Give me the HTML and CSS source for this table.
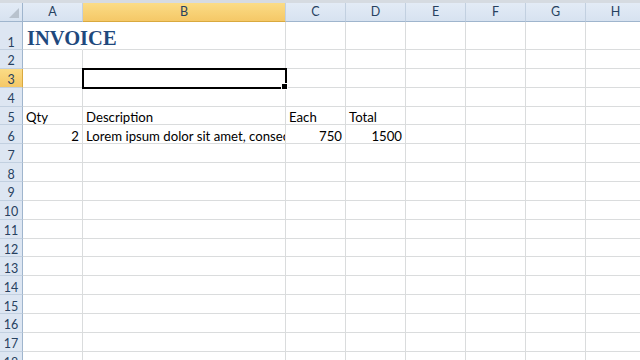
FILE: index.html
```html
<!DOCTYPE html>
<html>
<head>
<meta charset="utf-8">
<link rel="stylesheet" href="styles.css">
</head>
<body>
<div class="sheet">
  <div class="strip"></div>
  <div class="row head">
    <div class="corner"><span class="tri"></span></div>
    <div class="ch">A</div>
    <div class="ch sel">B</div>
    <div class="ch">C</div>
    <div class="ch">D</div>
    <div class="ch">E</div>
    <div class="ch">F</div>
    <div class="ch">G</div>
    <div class="ch">H</div>
  </div>
  <div class="row tall">
    <div class="rh">1</div>
    <div class="c title">INVOICE</div><div class="c"></div><div class="c"></div><div class="c"></div><div class="c"></div><div class="c"></div><div class="c"></div><div class="c"></div>
  </div>
  <div class="row">
    <div class="rh">2</div>
    <div class="c"></div><div class="c"></div><div class="c"></div><div class="c"></div><div class="c"></div><div class="c"></div><div class="c"></div><div class="c"></div>
  </div>
  <div class="row">
    <div class="rh sel">3</div>
    <div class="c"></div><div class="c active"><span class="handle"></span></div><div class="c"></div><div class="c"></div><div class="c"></div><div class="c"></div><div class="c"></div><div class="c"></div>
  </div>
  <div class="row">
    <div class="rh">4</div>
    <div class="c"></div><div class="c"></div><div class="c"></div><div class="c"></div><div class="c"></div><div class="c"></div><div class="c"></div><div class="c"></div>
  </div>
  <div class="row">
    <div class="rh">5</div>
    <div class="c">Qty</div><div class="c">Description</div><div class="c">Each</div><div class="c">Total</div><div class="c"></div><div class="c"></div><div class="c"></div><div class="c"></div>
  </div>
  <div class="row">
    <div class="rh">6</div>
    <div class="c num">2</div><div class="c">Lorem ipsum dolor sit amet, consectetur</div><div class="c num">750</div><div class="c num">1500</div><div class="c"></div><div class="c"></div><div class="c"></div><div class="c"></div>
  </div>
  <div class="row">
    <div class="rh">7</div>
    <div class="c"></div><div class="c"></div><div class="c"></div><div class="c"></div><div class="c"></div><div class="c"></div><div class="c"></div><div class="c"></div>
  </div>
  <div class="row">
    <div class="rh">8</div>
    <div class="c"></div><div class="c"></div><div class="c"></div><div class="c"></div><div class="c"></div><div class="c"></div><div class="c"></div><div class="c"></div>
  </div>
  <div class="row">
    <div class="rh">9</div>
    <div class="c"></div><div class="c"></div><div class="c"></div><div class="c"></div><div class="c"></div><div class="c"></div><div class="c"></div><div class="c"></div>
  </div>
  <div class="row">
    <div class="rh">10</div>
    <div class="c"></div><div class="c"></div><div class="c"></div><div class="c"></div><div class="c"></div><div class="c"></div><div class="c"></div><div class="c"></div>
  </div>
  <div class="row">
    <div class="rh">11</div>
    <div class="c"></div><div class="c"></div><div class="c"></div><div class="c"></div><div class="c"></div><div class="c"></div><div class="c"></div><div class="c"></div>
  </div>
  <div class="row">
    <div class="rh">12</div>
    <div class="c"></div><div class="c"></div><div class="c"></div><div class="c"></div><div class="c"></div><div class="c"></div><div class="c"></div><div class="c"></div>
  </div>
  <div class="row">
    <div class="rh">13</div>
    <div class="c"></div><div class="c"></div><div class="c"></div><div class="c"></div><div class="c"></div><div class="c"></div><div class="c"></div><div class="c"></div>
  </div>
  <div class="row">
    <div class="rh">14</div>
    <div class="c"></div><div class="c"></div><div class="c"></div><div class="c"></div><div class="c"></div><div class="c"></div><div class="c"></div><div class="c"></div>
  </div>
  <div class="row">
    <div class="rh">15</div>
    <div class="c"></div><div class="c"></div><div class="c"></div><div class="c"></div><div class="c"></div><div class="c"></div><div class="c"></div><div class="c"></div>
  </div>
  <div class="row">
    <div class="rh">16</div>
    <div class="c"></div><div class="c"></div><div class="c"></div><div class="c"></div><div class="c"></div><div class="c"></div><div class="c"></div><div class="c"></div>
  </div>
  <div class="row">
    <div class="rh">17</div>
    <div class="c"></div><div class="c"></div><div class="c"></div><div class="c"></div><div class="c"></div><div class="c"></div><div class="c"></div><div class="c"></div>
  </div>
  <div class="row">
    <div class="rh">18</div>
    <div class="c"></div><div class="c"></div><div class="c"></div><div class="c"></div><div class="c"></div><div class="c"></div><div class="c"></div><div class="c"></div>
  </div>
</div>
</body>
</html>
```
FILE: styles.css
```css
html, body {
  margin: 0;
  padding: 0;
  background: #ffffff;
  overflow: hidden;
}

.sheet {
  width: 640px;
  height: 360px;
  overflow: hidden;
  font-family: Lato, "Liberation Sans", sans-serif;
  font-size: 13.2px;
  color: #000;
}

.strip {
  height: 3px;
  background: #d6dbe1;
}

/* every row shares the same column tracks */
.row {
  display: grid;
  grid-template-columns: 23px 60px 203px 60px 60px 60px 60px 60px 60px;
  height: 18.87px;
}

.row.head {
  height: 19px;
}

.row.tall {
  height: 28px;
}

/* cell text sits at the bottom of the row, like a spreadsheet */
.c {
  box-sizing: border-box;
  border-right: 1px solid #dadcdd;
  border-bottom: 1px solid #dadcdd;
  padding: 0 3px 0 3px;
  white-space: nowrap;
  overflow: hidden;
  display: flex;
  align-items: flex-end;
  line-height: 1;
  position: relative;
}

.c.num {
  justify-content: flex-end;
}

.c.title {
  overflow: visible;
  font-family: "Liberation Serif", "DejaVu Serif", serif;
  font-weight: bold;
  font-size: 20.5px;
  color: #1f497d;
  padding-left: 4px;
  padding-bottom: 1px;
  border-right-color: transparent;
  z-index: 1;
}

.ch, .rh, .corner {
  box-sizing: border-box;
  background: linear-gradient(#e3ebf6, #d7e2f0);
  color: #27415f;
  font-family: Lato, "Liberation Sans", sans-serif;
  font-size: 12.5px;
  display: flex;
  align-items: center;
  justify-content: center;
  line-height: 1;
}

.ch {
  border-right: 1px solid #c2d0e0;
  border-bottom: 1px solid #9fb5cd;
}

.rh {
  border-right: 1px solid #9fb5cd;
  border-bottom: 1px solid #c2d0e0;
  background: #dde6f2;
  align-items: flex-end;
  padding-bottom: 0;
}

.ch.sel {
  background: linear-gradient(#fbdc86, #f5c867);
  border-bottom-color: #d9a93f;
}

.rh.sel {
  background: linear-gradient(#fbdc86, #f5c867);
  border-right-color: #d9a93f;
}

.corner {
  position: relative;
  border-right: 1px solid #9fb5cd;
  border-bottom: 1px solid #9fb5cd;
}

.tri {
  position: absolute;
  right: 3px;
  bottom: 3px;
  width: 0;
  height: 0;
  border-left: 10px solid transparent;
  border-bottom: 10px solid #b8c2cd;
}

.c.active {
  overflow: visible;
  outline: 2px solid #000;
  outline-offset: -1px;
  z-index: 2;
}

.handle {
  position: absolute;
  right: -3px;
  bottom: -3px;
  width: 5px;
  height: 5px;
  background: #000;
  border: 1px solid #fff;
  box-sizing: content-box;
}
```
